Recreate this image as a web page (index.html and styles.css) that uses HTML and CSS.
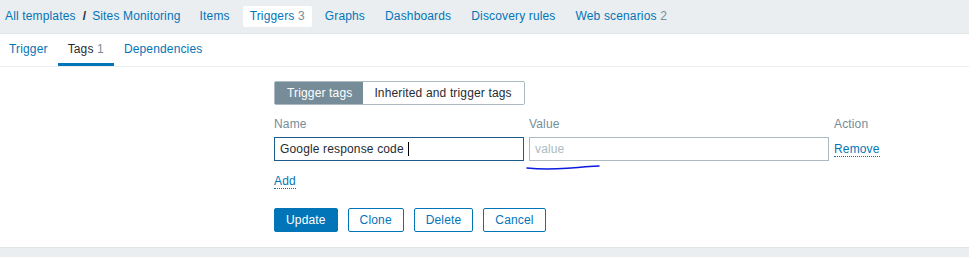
FILE: index.html
```html
<!DOCTYPE html>
<html lang="en">
<head>
    <meta charset="UTF-8">
    <title>Triggers - Sites Monitoring</title>
    <link rel="stylesheet" href="styles.css">
</head>
<body>
    <!-- breadcrumbs + template sections -->
    <ul class="object-nav">
        <li class="crumb"><a href="#">All templates</a></li>
        <li class="crumb-sep">/</li>
        <li class="crumb crumb-last"><a href="#">Sites Monitoring</a></li>
        <li><a href="#">Items</a></li>
        <li class="selected"><a href="#">Triggers</a> <sup>3</sup></li>
        <li><a href="#">Graphs</a></li>
        <li><a href="#">Dashboards</a></li>
        <li><a href="#">Discovery rules</a></li>
        <li><a href="#">Web scenarios</a> <sup>2</sup></li>
    </ul>

    <ul class="form-tabs">
        <li><a href="#">Trigger</a></li>
        <li class="active"><a href="#">Tags</a> <sup>1</sup></li>
        <li><a href="#">Dependencies</a></li>
    </ul>

    <div class="form-body">
        <div class="radio-seg">
            <span class="seg on">Trigger tags</span>
            <span class="seg">Inherited and trigger tags</span>
        </div>

        <div class="tags-table">
            <div class="th">Name</div>
            <div class="th">Value</div>
            <div class="th">Action</div>

            <div class="input focused">Google response code<span class="caret"></span></div>
            <div class="input-wrap">
                <div class="input placeholder">value</div>
                <!-- pen mark from the original screenshot -->
                <svg class="pen-mark" width="80" height="10" viewBox="0 0 80 10">
                    <path d="M1 5 C 20 7, 30 6, 45 5 S 65 3, 73 3" fill="none" stroke="#0a1be0" stroke-width="1.6" stroke-linecap="round"/>
                </svg>
            </div>
            <div class="action"><a href="#" class="dotted">Remove</a></div>
        </div>

        <a href="#" class="dotted add-link">Add</a>

        <div class="buttons">
            <button class="btn primary">Update</button>
            <button class="btn">Clone</button>
            <button class="btn">Delete</button>
            <button class="btn">Cancel</button>
        </div>
    </div>

    <div class="footer"></div>
</body>
</html>
```

FILE: styles.css
```css
body {
    margin: 0;
    font-family: 'Liberation Sans', Arial, sans-serif;
    font-size: 12px;
    letter-spacing: 0.15px;
    color: #1f2c33;
    background: #fff;
}

a {
    color: #0275b8;
    text-decoration: none;
}

sup {
    vertical-align: baseline;
    font-size: 12px;
    color: #768d99;
}

/* top navigation */
.object-nav {
    display: flex;
    align-items: center;
    list-style: none;
    margin: 0;
    padding: 0;
    height: 33px;
    background: #ebeef0;
    border-bottom: 1px solid #dfe4e7;
}

.object-nav li {
    padding: 4px 7px;
    margin-right: 6px;
    line-height: 13px;
    border-radius: 2px;
}

.object-nav .crumb {
    padding: 4px 0;
    margin-right: 0;
}

.object-nav .crumb:first-child {
    padding-left: 5px;
}

.object-nav .crumb-last {
    margin-right: 12px;
}

.object-nav .crumb-sep {
    padding: 4px 6px 4px 7px;
    margin: 0;
    color: #1f2c33;
    font-weight: bold;
}

.object-nav .selected {
    background: #fff;
}

/* form tabs */
.form-tabs {
    display: flex;
    list-style: none;
    margin: 0;
    padding: 0;
    height: 32px;
    border-bottom: 1px solid #ebeef0;
}

.form-tabs li {
    padding: 0 10px;
    line-height: 30px;
    border-bottom: 3px solid transparent;
}

.form-tabs li:first-child {
    padding-left: 9px;
}

.form-tabs .active {
    border-bottom-color: #0275b8;
}

.form-tabs .active a {
    color: #1f2c33;
}

/* form content */
.form-body {
    padding: 14px 0 15px 274px;
}

.radio-seg {
    display: inline-flex;
    border: 1px solid #acbbc2;
    border-radius: 2px;
    height: 22px;
}

.seg {
    padding: 0 11px;
    line-height: 22px;
    color: #1f2c33;
}

.seg.on {
    background: #768d99;
    color: #fff;
    padding: 0 11px 0 12px;
}

.seg + .seg {
    padding-left: 11px;
    padding-right: 12px;
}

.tags-table {
    display: grid;
    grid-template-columns: 250px 300px auto;
    column-gap: 5px;
    row-gap: 6px;
    margin-top: 12px;
    width: 610px;
}

.th {
    color: #768d99;
    line-height: 14px;
}

.input-wrap {
    position: relative;
}

.input {
    box-sizing: border-box;
    height: 24px;
    line-height: 22px;
    border: 1px solid #acbbc2;
    padding: 0 5px;
    color: #1f2c33;
    background: #fff;
}

.input.focused {
    border-color: #1b5c8c;
}

.caret {
    display: inline-block;
    width: 1px;
    height: 14px;
    margin-left: 4px;
    vertical-align: -3px;
    background: #000;
}

.input.placeholder {
    color: #acbbc2;
    width: 300px;
}

.pen-mark {
    position: absolute;
    left: -3px;
    top: 26px;
}

.action {
    line-height: 24px;
}

.dotted {
    border-bottom: 1px dotted #0275b8;
}

.add-link {
    display: inline-block;
    margin-top: 14px;
    line-height: 13px;
}

.buttons {
    display: flex;
    gap: 10px;
    margin-top: 19px;
}

.btn {
    font-family: 'Liberation Sans', Arial, sans-serif;
    font-size: 12px;
    letter-spacing: 0.15px;
    height: 24px;
    padding: 0 11px;
    border: 1px solid #0275b8;
    border-radius: 2px;
    background: #fff;
    color: #0275b8;
}

.btn.primary {
    background: #0275b8;
    color: #fff;
}

.footer {
    height: 10px;
    background: #ebeef0;
    border-top: 1px solid #dfe4e7;
}
```
